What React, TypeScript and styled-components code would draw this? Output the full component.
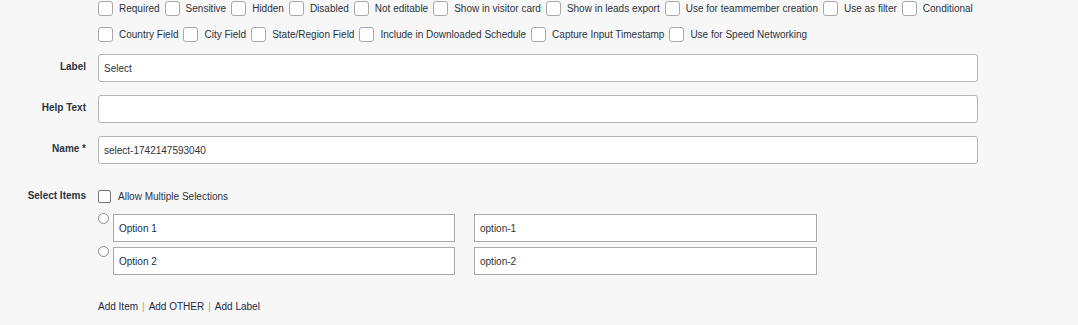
import styled, { createGlobalStyle } from "styled-components";

const GlobalStyle = createGlobalStyle`
  html, body {
    margin: 0;
    padding: 0;
    background: #f7f7f7;
  }
  body {
    font-family: "Liberation Sans", Arial, sans-serif;
    font-size: 10px;
    color: #2b3340;
  }
`;

const flagsRowOne = [
  "Required",
  "Sensitive",
  "Hidden",
  "Disabled",
  "Not editable",
  "Show in visitor card",
  "Show in leads export",
  "Use for teammember creation",
  "Use as filter",
  "Conditional",
];

const flagsRowTwo = [
  "Country Field",
  "City Field",
  "State/Region Field",
  "Include in Downloaded Schedule",
  "Capture Input Timestamp",
  "Use for Speed Networking",
];

const options = [
  { label: "Option 1", value: "option-1" },
  { label: "Option 2", value: "option-2" },
];

const App = () => {
  return (
    <Page>
      <GlobalStyle />
      <Flags>
        {[flagsRowOne, flagsRowTwo].map((row, i) => (
          <FlagRow key={i}>
            {row.map((flag) => (
              <Flag key={flag}>
                <Box />
                <span>{flag}</span>
              </Flag>
            ))}
          </FlagRow>
        ))}
      </Flags>

      <Fields>
        <Field>
          <FieldLabel>Label</FieldLabel>
          <TextInput defaultValue="Select" />
        </Field>
        <Field>
          <FieldLabel>Help Text</FieldLabel>
          <TextInput defaultValue="" />
        </Field>
        <Field>
          <FieldLabel>Name *</FieldLabel>
          <TextInput defaultValue="select-1742147593040" />
        </Field>

        <ItemsField>
          <FieldLabel>Select Items</FieldLabel>
          <Items>
            <Multiple>
              <SmallBox />
              <span>Allow Multiple Selections</span>
            </Multiple>
            {options.map((o) => (
              <OptionRow key={o.value}>
                <Radio />
                <OptionInput defaultValue={o.label} />
                <ValueInput defaultValue={o.value} />
              </OptionRow>
            ))}
            <Links>
              <a>Add Item</a>
              <Sep>|</Sep>
              <a>Add OTHER</a>
              <Sep>|</Sep>
              <a>Add Label</a>
            </Links>
          </Items>
        </ItemsField>
      </Fields>
    </Page>
  );
};

export default App;

const Page = styled.div`
  width: 1078px;
  height: 325px;
  overflow: hidden;
  box-sizing: border-box;
`;

const Flags = styled.div`
  display: flex;
  flex-direction: column;
  gap: 11px;
  padding: 1px 0 0 98px;
`;

const FlagRow = styled.div`
  display: flex;
  align-items: center;
  height: 15px;
`;

const Flag = styled.label`
  display: flex;
  align-items: center;
  gap: 6px;
  margin-right: 5px;
  color: #2b3340;
  white-space: nowrap;
`;

const Box = styled.span`
  width: 15px;
  height: 15px;
  box-sizing: border-box;
  border: 1px solid #a9a9a9;
  border-radius: 3px;
  background: #fff;
`;

const Fields = styled.div`
  display: flex;
  flex-direction: column;
  gap: 13px;
  margin-top: 12px;
`;

const Field = styled.div`
  display: grid;
  grid-template-columns: 86px 880px;
  column-gap: 12px;
  align-items: center;
`;

const FieldLabel = styled.div`
  text-align: right;
  font-weight: 700;
  color: #2b3340;
  align-self: start;
  padding-top: 7px;
`;

const TextInput = styled.input`
  height: 28px;
  box-sizing: border-box;
  border: 1px solid #b4b4b4;
  border-radius: 3px;
  background: #fff;
  padding: 0 5px;
  font: inherit;
  color: #333;
  outline: none;
`;

const ItemsField = styled(Field)`
  margin-top: 12px;
  align-items: start;
  ${FieldLabel} {
    padding-top: 1px;
  }
`;

const Items = styled.div`
  display: flex;
  flex-direction: column;
`;

const Multiple = styled.label`
  display: flex;
  align-items: center;
  gap: 7px;
  height: 15px;
  margin-bottom: 10px;
`;

const SmallBox = styled.span`
  width: 13px;
  height: 13px;
  box-sizing: border-box;
  border: 1px solid #767676;
  border-radius: 2px;
  background: #fff;
`;

const OptionRow = styled.div`
  display: flex;
  align-items: flex-start;
  margin-bottom: 5px;
`;

const Radio = styled.span`
  width: 11px;
  height: 11px;
  box-sizing: border-box;
  border: 1px solid #8a8a8a;
  border-radius: 50%;
  background: #fff;
  margin: -1px 4px 0 0;
`;

const OptionInput = styled.input`
  width: 342px;
  height: 28px;
  box-sizing: border-box;
  border: 1px solid #a9a9a9;
  border-radius: 0;
  background: #fff;
  padding: 0 5px;
  font: inherit;
  color: #1d2a44;
  outline: none;
`;

const ValueInput = styled(OptionInput)`
  width: 343px;
  margin-left: 19px;
  color: #333;
`;

const Links = styled.div`
  margin-top: 21px;
  display: flex;
  align-items: center;
  a {
    color: #1d2a44;
    cursor: pointer;
  }
`;

const Sep = styled.span`
  color: #d49a63;
  margin: 0 4px;
`;
